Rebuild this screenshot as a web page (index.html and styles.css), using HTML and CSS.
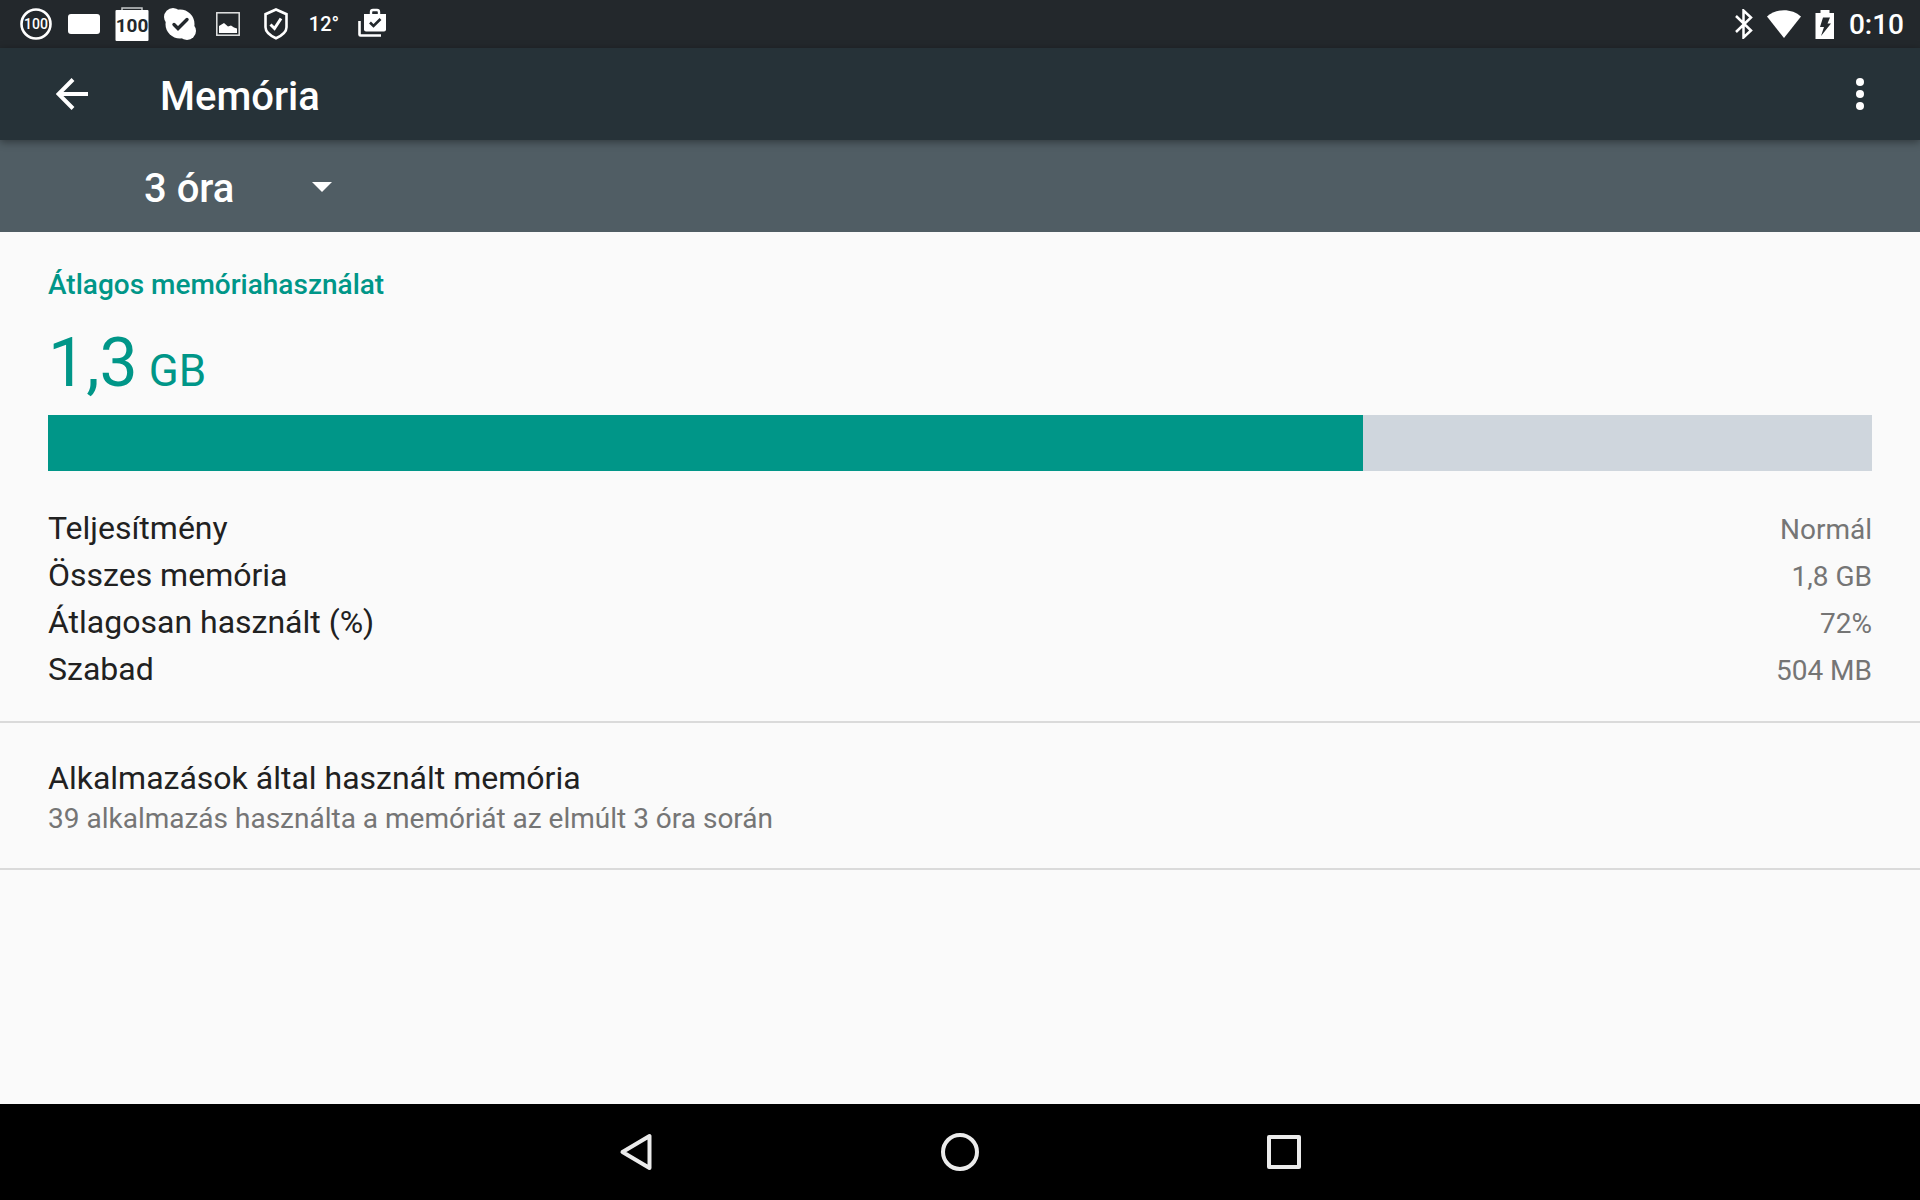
FILE: index.html
```
<!DOCTYPE html>
<html lang="hu">
<head>
    <meta charset="UTF-8">
    <meta name="viewport" content="width=device-width, initial-scale=1.0">
    <title>Memória</title>
    <link rel="stylesheet" href="styles.css">
</head>
<body>
    <div class="status-bar">
        <div class="notifications">
            <svg class="icon" viewBox="0 0 48 48">
                <circle cx="24" cy="24" r="14.5" fill="none" stroke="#fff" stroke-width="2.6"/>
                <text class="badge-text" x="24" y="29" text-anchor="middle">100</text>
            </svg>
            <svg class="icon" viewBox="0 0 48 48">
                <rect x="8" y="14" width="32" height="20" rx="3" fill="#fff"/>
            </svg>
            <svg class="icon" viewBox="0 0 48 48">
                <path d="M14 10V8h20v2" fill="none" stroke="#c8cacb" stroke-width="1.5"/>
                <rect x="7.5" y="10" width="33" height="31" rx="1" fill="#fff"/>
                <text class="calendar-text" x="24" y="32" text-anchor="middle">100</text>
            </svg>
            <svg class="icon" viewBox="0 0 48 48">
                <g fill="#fff">
                    <circle cx="24" cy="24" r="14.5"/>
                    <circle cx="17" cy="17" r="9"/>
                    <circle cx="31" cy="31" r="9"/>
                </g>
                <path d="M18 24.5l4 4 9-9" fill="none" stroke="#23282c" stroke-width="3.4" stroke-linecap="round"/>
            </svg>
            <svg class="icon" viewBox="0 0 48 48">
                <rect x="12.8" y="12.8" width="22.4" height="22.4" fill="none" stroke="#e4e5e5" stroke-width="1.5"/>
                <path d="M15 33v-7l5-3 4 3.5 3-1 3 2 3 1V33z" fill="#fff"/>
            </svg>
            <svg class="icon" viewBox="0 0 48 48">
                <path d="M24 9.5l10.500 4.700v13c0 5-5 8.500-10.500 11-5.500-2.500-10.500-6-10.500-11v-13z" fill="none" stroke="#fff" stroke-width="2.6"/>
                <path d="M18.500 24.500l4 4 6.500-10" fill="none" stroke="#fff" stroke-width="3"/>
            </svg>
            <span class="temperature">12°</span>
            <svg class="icon" viewBox="0 0 48 48">
                <path d="M11.500 21v13.500q0 1 1 1H33" fill="none" stroke="#fff" stroke-width="2.6"/>
                <path d="M16 14h22v15.500q0 2-2 2H18q-2 0-2-2z" fill="#fff"/>
                <path d="M23 14v-2q0-2 2-2h4q2 0 2 2v2" fill="none" stroke="#fff" stroke-width="2.4"/>
                <path d="M22 22.500l3.500 3.500 7-7" fill="none" stroke="#23282c" stroke-width="2.6"/>
            </svg>
        </div>
        <div class="system">
            <svg width="18" height="30" viewBox="0 0 18 30">
                <path d="M1 7l15 14.500-7.500 7V1.500l7.500 7L1 23" fill="none" stroke="#fff" stroke-width="2.5"/>
            </svg>
            <svg width="34" height="28" viewBox="0 0 34 28">
                <path d="M0 6.500C9-2 25-2 34 6.500L17 28z" fill="#fff"/>
            </svg>
            <svg width="20" height="30" viewBox="0 0 20 30">
                <path d="M5.500 1h9v3H19v26H.5V4h5z" fill="#fff"/>
                <path d="M8 8.500h7l-2.500 6h3.500l-10 12.500 3-9H5z" fill="#23282c"/>
            </svg>
            <span class="clock">0:10</span>
        </div>
    </div>

    <header class="app-bar">
        <button class="icon-button" aria-label="Vissza">
            <svg width="32" height="32" viewBox="0 0 32 32">
                <path d="M32 16H3M17 1.500L2.500 16 17 30.500" fill="none" stroke="#fff" stroke-width="4"/>
            </svg>
        </button>
        <h1>Memória</h1>
        <button class="icon-button" aria-label="További lehetőségek">
            <svg width="8" height="32" viewBox="0 0 8 32">
                <g fill="#fff">
                    <circle cx="4" cy="4" r="4"/>
                    <circle cx="4" cy="16" r="4"/>
                    <circle cx="4" cy="28" r="4"/>
                </g>
            </svg>
        </button>
    </header>

    <div class="duration-bar">
        <div class="spinner">
            <select aria-label="Időtartam">
                <option>3 óra</option>
                <option>6 óra</option>
                <option>12 óra</option>
                <option>1 nap</option>
            </select>
            <svg width="20" height="10" viewBox="0 0 20 10">
                <path d="M0 0h20L10 10z" fill="#fff"/>
            </svg>
        </div>
    </div>

    <main>
        <section class="summary">
            <h2>Átlagos memóriahasználat</h2>
            <p class="amount">1,3<small> GB</small></p>
            <div class="usage">
                <div class="usage-fill" style="width: 72.1%;"></div>
            </div>
            <table class="details">
                <tr>
                    <th scope="row">Teljesítmény</th>
                    <td>Normál</td>
                </tr>
                <tr>
                    <th scope="row">Összes memória</th>
                    <td>1,8 GB</td>
                </tr>
                <tr>
                    <th scope="row">Átlagosan használt (%)</th>
                    <td>72%</td>
                </tr>
                <tr>
                    <th scope="row">Szabad</th>
                    <td>504 MB</td>
                </tr>
            </table>
        </section>
        <a class="apps" href="#">
            <span class="apps-title">Alkalmazások által használt memória</span>
            <span class="apps-summary">39 alkalmazás használta a memóriát az elmúlt 3 óra során</span>
        </a>
    </main>

    <nav class="nav-bar">
        <button aria-label="Vissza">
            <svg width="40" height="40" viewBox="0 0 40 40">
                <path d="M33.500 4v32L6.500 20z"/>
            </svg>
        </button>
        <button aria-label="Kezdőképernyő">
            <svg width="40" height="40" viewBox="0 0 40 40">
                <circle cx="20" cy="20" r="17"/>
            </svg>
        </button>
        <button aria-label="Áttekintés">
            <svg width="40" height="40" viewBox="0 0 40 40">
                <rect x="5" y="5" width="30" height="30"/>
            </svg>
        </button>
    </nav>
</body>
</html>
```
FILE: styles.css
```
* {
    margin: 0;
    padding: 0;
    box-sizing: border-box;
}
body {
    display: flex;
    flex-direction: column;
    min-height: 100vh;
    background-color: #fafafa;
    color: #212121;
    font-family: Roboto, "Noto Sans", sans-serif;
    font-size: 32px;
}
svg {
    display: block;
    flex: none;
}
button {
    display: flex;
    align-items: center;
    justify-content: center;
    background: none;
    border: none;
    cursor: pointer;
}

/* status bar */
.status-bar {
    display: flex;
    justify-content: space-between;
    height: 48px;
    padding: 0 16px 0 12px;
    background-color: #23282c;
    color: #fff;
}
.notifications,
.system {
    display: flex;
    align-items: center;
}
.system {
    gap: 14px;
}
.icon,
.temperature {
    width: 48px;
    height: 48px;
}
.temperature {
    font-size: 20px;
    font-weight: 500;
    line-height: 48px;
    text-align: center;
}
.badge-text {
    font-size: 14px;
    font-weight: 500;
    fill: #fff;
}
.calendar-text {
    font-size: 19px;
    font-weight: bold;
    fill: #23282c;
}
.clock {
    padding-top: 2px;
    font-size: 28px;
    font-weight: 500;
    line-height: 48px;
}

/* app bar */
.app-bar {
    display: flex;
    align-items: center;
    position: relative;
    height: 92px;
    padding: 0 12px 0 24px;
    background-color: #263238;
    color: #fff;
    box-shadow: 0 2px 8px rgba(0, 0, 0, 0.4);
}
.icon-button {
    width: 96px;
    height: 92px;
}
.app-bar h1 {
    flex: 1;
    padding: 6px 0 0 40px;
    font-size: 40px;
    font-weight: 500;
    line-height: 48px;
}
.duration-bar {
    display: flex;
    align-items: center;
    height: 92px;
    padding: 2px 0 0 144px;
    background-color: #505d64;
}
.spinner {
    display: grid;
    align-items: center;
    width: 188px;
}
.spinner select,
.spinner svg {
    grid-area: 1 / 1;
}
.spinner select {
    appearance: none;
    padding-top: 4px;
    background: none;
    border: none;
    color: #fff;
    font-family: inherit;
    font-size: 40px;
    font-weight: 500;
    line-height: 48px;
    cursor: pointer;
}
.spinner option {
    background-color: #505d64;
}
.spinner svg {
    justify-self: end;
    pointer-events: none;
}

/* content */
main {
    flex: 1;
}
.summary {
    padding: 32px 48px 28px;
    border-bottom: 2px solid #dadada;
}
.summary h2 {
    color: #009688;
    font-size: 28px;
    font-weight: 500;
    line-height: 42px;
}
.amount {
    padding: 17px 0 12px;
    color: #009688;
    font-size: 68px;
    line-height: 80px;
}
.amount small {
    font-size: 44px;
    line-height: 1;
}
.usage {
    height: 56px;
    background-color: #cfd6dd;
}
.usage-fill {
    height: 100%;
    background-color: #009688;
}
.details {
    width: 100%;
    margin-top: 34px;
    border-collapse: collapse;
}
.details th,
.details td {
    height: 47px;
    vertical-align: baseline;
}
.details th {
    font-weight: 400;
    line-height: 47px;
    text-align: left;
}
.details td {
    color: #757575;
    font-size: 28px;
    line-height: 40px;
    text-align: right;
}
.apps {
    display: block;
    padding: 35px 48px 28px;
    border-bottom: 2px solid #dadada;
    color: inherit;
    text-decoration: none;
}
.apps span {
    display: block;
}
.apps-title {
    line-height: 40px;
}
.apps-summary {
    color: #757575;
    font-size: 28px;
    line-height: 42px;
}

/* navigation bar */
.nav-bar {
    display: flex;
    justify-content: center;
    height: 96px;
    background-color: #000;
}
.nav-bar button {
    width: 324px;
}
.nav-bar svg {
    fill: none;
    stroke: #ebebeb;
    stroke-width: 4;
    stroke-linejoin: round;
}
```
